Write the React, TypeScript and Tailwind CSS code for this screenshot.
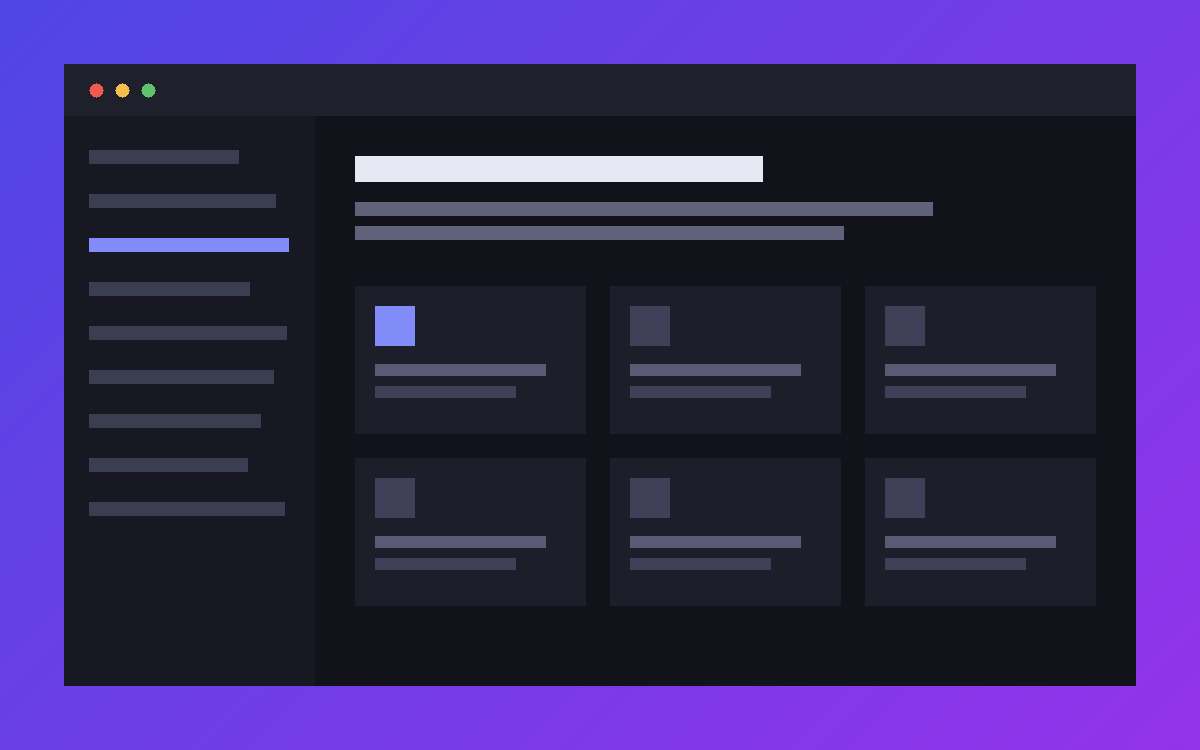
const navItems = [
  { id: 1, width: "w-[150px]" },
  { id: 2, width: "w-[187px]" },
  { id: 3, width: "w-[200px]", active: true },
  { id: 4, width: "w-[161px]" },
  { id: 5, width: "w-[198px]" },
  { id: 6, width: "w-[185px]" },
  { id: 7, width: "w-[172px]" },
  { id: 8, width: "w-[159px]" },
  { id: 9, width: "w-[196px]" },
];

const cards = [
  { id: 1, active: true },
  { id: 2 },
  { id: 3 },
  { id: 4 },
  { id: 5 },
  { id: 6 },
];

function WindowDot({ color }: { color: string }) {
  return (
    <svg viewBox="0 0 15 15" className={`size-[15px] ${color}`} fill="currentColor" shapeRendering="crispEdges" aria-hidden="true">
      <circle cx="7.5" cy="7.5" r="7" />
      <path d="M7 0h1v15h-1zM0 7h15v1h-15z" />
    </svg>
  );
}

function TitleBar() {
  return (
    <header className="flex h-[52px] gap-[11px] bg-[#1e202c] px-[25px] pt-[19px]">
      <WindowDot color="text-[#f05a50]" />
      <WindowDot color="text-[#f5be50]" />
      <WindowDot color="text-[#5fc36e]" />
    </header>
  );
}

function Sidebar() {
  return (
    <nav className="w-[251px] shrink-0 bg-[#181822] px-[25px] py-[34px]">
      <ul className="flex flex-col gap-[30px]">
        {navItems.map((item) => (
          <li key={item.id} className={`h-3.5 ${item.width} ${item.active ? "bg-[#818cf8]" : "bg-[#3a3e50]"}`} />
        ))}
      </ul>
    </nav>
  );
}

function Card({ active }: { active?: boolean }) {
  return (
    <article className="bg-[#1c1e2a] px-5 pt-5 pb-9">
      <div className={`size-10 ${active ? "bg-[#818cf8]" : "bg-[#404058]"}`} />
      <div className="mt-[18px] h-3 w-[89.5%] bg-[#5a5a74]" />
      <div className="mt-2.5 h-3 w-[74%] bg-[#404058]" />
    </article>
  );
}

export default function App() {
  return (
    <div className="flex min-h-screen flex-col bg-[linear-gradient(135deg,#4f46e5,#9333ea)] p-16">
      <div className="flex flex-1 flex-col bg-[#12121a]">
        <TitleBar />
        <div className="flex flex-1">
          <Sidebar />
          <main className="min-w-0 flex-1 p-10">
            <div className="h-[26px] w-[55%] bg-[#e8e8f5]" />
            <div className="mt-5 h-3.5 w-[78%] bg-[#60627a]" />
            <div className="mt-2.5 h-3.5 w-[66%] bg-[#60627a]" />
            <section className="mt-[46px] grid grid-cols-3 gap-6">
              {cards.map((card) => (
                <Card key={card.id} active={card.active} />
              ))}
            </section>
          </main>
        </div>
      </div>
    </div>
  );
}
